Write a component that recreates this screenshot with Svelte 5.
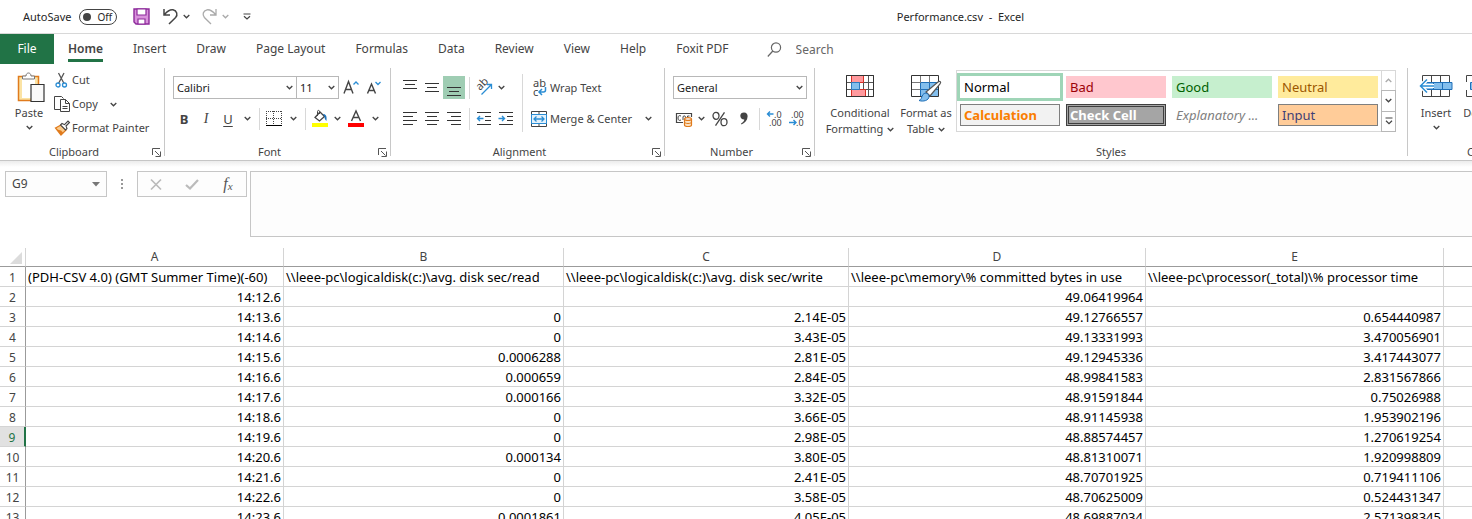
<script>
  const tabs = ['Home', 'Insert', 'Draw', 'Page Layout', 'Formulas', 'Data', 'Review', 'View', 'Help', 'Foxit PDF'];
  const cellStyles = [
    { name: 'Normal', kind: 'normal' },
    { name: 'Bad', kind: 'bad' },
    { name: 'Good', kind: 'good' },
    { name: 'Neutral', kind: 'neutral' },
    { name: 'Calculation', kind: 'calculation' },
    { name: 'Check Cell', kind: 'check' },
    { name: 'Explanatory ...', kind: 'explanatory' },
    { name: 'Input', kind: 'input' }
  ];
  const columns = ['A', 'B', 'C', 'D', 'E', ''];
  const rows = [
    ['(PDH-CSV 4.0) (GMT Summer Time)(-60)', '\\\\leee-pc\\logicaldisk(c:)\\avg. disk sec/read', '\\\\leee-pc\\logicaldisk(c:)\\avg. disk sec/write', '\\\\leee-pc\\memory\\% committed bytes in use', '\\\\leee-pc\\processor(_total)\\% processor time'],
    ['14:12.6', '', '', '49.06419964', ''],
    ['14:13.6', '0', '2.14E-05', '49.12766557', '0.654440987'],
    ['14:14.6', '0', '3.43E-05', '49.13331993', '3.470056901'],
    ['14:15.6', '0.0006288', '2.81E-05', '49.12945336', '3.417443077'],
    ['14:16.6', '0.000659', '2.84E-05', '48.99841583', '2.831567866'],
    ['14:17.6', '0.000166', '3.32E-05', '48.91591844', '0.75026988'],
    ['14:18.6', '0', '3.66E-05', '48.91145938', '1.953902196'],
    ['14:19.6', '0', '2.98E-05', '48.88574457', '1.270619254'],
    ['14:20.6', '0.000134', '3.80E-05', '48.81310071', '1.920998809'],
    ['14:21.6', '0', '2.41E-05', '48.70701925', '0.719411106'],
    ['14:22.6', '0', '3.58E-05', '48.70625009', '0.524431347'],
    ['14:23.6', '0.0001861', '4.05E-05', '48.69887034', '2.571398345']
  ];
  const activeRow = 9;
  let autosave = $state(false);
  let cellRef = $state('G9');
</script>

{#snippet chev(color = '#444')}
  <svg class="chev" width="7" height="5" viewBox="0 0 7 5" fill="none" stroke={color} stroke-width="1.3"><path d="M.7 1 3.5 3.8 6.3 1" /></svg>
{/snippet}

{#snippet launcher(label)}
  <button class="launcher" aria-label={label}>
    <svg width="9" height="9" viewBox="0 0 9 9" fill="none" stroke="#555"><path d="M.5 7V.5H8M3 3l4.5 4.5M8.5 3.5v5h-5" /></svg>
  </button>
{/snippet}

{#snippet lines(list)}
  <svg width="16" height="16" viewBox="0 0 16 16" stroke="#333" shape-rendering="crispEdges">
    {#each list as [x1, x2, y]}<path d="M{x1} {y}.5H{x2}" />{/each}
  </svg>
{/snippet}

<div class="app">
  <header class="titlebar">
    <label class="autosave">
      <span>AutoSave</span>
      <input type="checkbox" bind:checked={autosave} />
      <span class="switch"><i></i><b>{autosave ? 'On' : 'Off'}</b></span>
    </label>
    <div class="quick">
      <button class="save" aria-label="Save">
        <svg width="17" height="17" viewBox="0 0 17 17"><path d="M1 1h15v15H3L1 14z" fill="#d992dc" stroke="#8d2a9b" stroke-width="1.4" /><path d="M4 1h9v6H4zM5 11h7v5H5z" fill="#fff" stroke="#8d2a9b" stroke-width="1.2" /></svg>
      </button>
      <button class="undo" aria-label="Undo">
        <svg width="15" height="17" viewBox="0 0 15 17" fill="none" stroke="#444" stroke-width="1.5"><path d="M1 1v6h6M1.5 6.5C4 3.5 7 1.3 10 1.8c4 .8 5 5 2.600 7.700L6 16" /></svg>
      </button>
      <button class="more" aria-label="Undo history">{@render chev()}</button>
      <button class="redo" aria-label="Redo">
        <svg width="15" height="17" viewBox="0 0 15 17" fill="none" stroke="#aaa" stroke-width="1.3"><path d="M14 1v6H8M13.500 6.500C11 3.500 8 1.300 5 1.800c-4 .8-5 5-2.600 7.700L9 16" /></svg>
      </button>
      <button class="more" aria-label="Redo history">{@render chev('#aaa')}</button>
      <button class="custom" aria-label="Customize Quick Access Toolbar">
        <svg width="8" height="7" viewBox="0 0 8 7" fill="none" stroke="#444" stroke-width="1.200"><path d="M.5 1h7M1 3.200 4 6l3-2.800" /></svg>
      </button>
    </div>
    <h1>Performance.csv&nbsp; -&nbsp; Excel</h1>
  </header>

  <nav class="tabs">
    <button class="file">File</button>
    {#each tabs as tab}
      <button class="tab" class:active={tab === 'Home'}>{tab}</button>
    {/each}
    <label class="search">
      <svg width="15" height="16" viewBox="0 0 15 16" fill="none" stroke="#666" stroke-width="1.200"><circle cx="9" cy="5.500" r="4.600" /><path d="M5.800 9 .8 14.500" /></svg>
      <input type="text" placeholder="Search" aria-label="Search" />
    </label>
  </nav>

  <div class="ribbon">
    <section class="group clipboard">
      <div class="body">
        <button class="big paste">
          <svg width="28" height="32" viewBox="0 0 28 32"><path d="M1.500 4.500h20v24h-20z" fill="#fbe3a4" stroke="#e07b1d" stroke-width="1.500" /><path d="M5 7h13v19H5z" fill="#fff" /><path d="M5.500 7V4h3.500c0-4 5-4 5 0h3.500v3z" fill="#fff" stroke="#777" /><path d="M14 12.500h13v17H14z" fill="#f9f9f9" stroke="#333" stroke-width="1.200" /></svg>
          <span>Paste</span>
          {@render chev()}
        </button>
        <div class="stack">
          <button>
            <svg width="16" height="16" viewBox="0 0 16 16" fill="none"><path d="M4.500 1l5.500 10.500M10 1l-5.500 10.500" stroke="#555" stroke-width="1.300" /><circle cx="4" cy="13" r="2" stroke="#2a8dd4" stroke-width="1.300" /><circle cx="10.500" cy="13" r="2" stroke="#2a8dd4" stroke-width="1.300" /></svg>
            <span>Cut</span>
          </button>
          <button>
            <svg width="16" height="16" viewBox="0 0 16 16" fill="#fff" stroke="#444"><path d="M6 13.500H.500V.500h7l2 2" /><path d="M6.500 3.500h5l4 4v8h-9z" /><path d="M11.500 3.500v4h4M8.500 10.500h5M8.500 12.500h5" fill="none" /></svg>
            <span>Copy</span>
            {@render chev()}
          </button>
          <button>
            <svg width="16" height="16" viewBox="0 0 16 16"><path d="M1.500 8 7 5l5 5-5 5z" fill="#fbcb8b" stroke="#e07b1d" stroke-width="1.300" /><path d="M3 9.500l4 1 2 2-2 2.500z" fill="#e07b1d" /><path d="M6.500 5 8 3.500l2.500 1.200L14 1l1.500 1.500L12 6l1 2.500-1.500 1.500z" fill="#fff" stroke="#444" stroke-width="1.100" /></svg>
            <span>Format Painter</span>
          </button>
        </div>
      </div>
      <footer><span>Clipboard</span>{@render launcher('Clipboard settings')}</footer>
    </section>

    <section class="group font">
      <div class="rows">
        <div class="row">
          <div class="combo face"><select aria-label="Font"><option>Calibri</option></select>{@render chev()}</div>
          <div class="combo size"><select aria-label="Font size"><option>11</option></select>{@render chev()}</div>
          <button class="w24" aria-label="Increase font size">
            <svg width="17" height="16" viewBox="0 0 17 16" fill="none"><path d="M1 13.500 5.500 1.500l4.500 12M2.500 9.500h6" stroke="#444" stroke-width="1.400" /><path d="M10.500 4.500 13 2l2.500 2.500" stroke="#2a8dd4" stroke-width="1.300" /></svg>
          </button>
          <button class="w22" aria-label="Decrease font size">
            <svg width="16" height="16" viewBox="0 0 16 16" fill="none"><path d="M1.500 13.500 5.500 4l4 9.500M3 10.500h5" stroke="#444" stroke-width="1.400" /><path d="M9.500 2 12 4.500 14.500 2" stroke="#2a8dd4" stroke-width="1.300" /></svg>
          </button>
        </div>
        <div class="row">
          <button class="w22 glyph bold">B</button>
          <button class="w22 glyph italic">I</button>
          <button class="w22 glyph under">U</button>
          <button class="w16" aria-label="Underline options">{@render chev()}</button>
          <i class="sep"></i>
          <button class="w22" aria-label="Borders">
            <svg width="16" height="16" viewBox="0 0 16 16" fill="none" stroke="#444" shape-rendering="crispEdges"><path d="M.5 0v14M15.500 0v14M0 .5h16" stroke-dasharray="1 1" /><path d="M7.500 0v14M0 7.500h16" stroke-dasharray="1 1" /><path d="M0 14.500h16" stroke="#000" /></svg>
          </button>
          <button class="w16" aria-label="Border options">{@render chev()}</button>
          <i class="sep"></i>
          <button class="w22" aria-label="Fill color">
            <svg width="16" height="17" viewBox="0 0 16 17"><path d="M3 7.500 8 2l4.500 4.500L7.500 11z" fill="#fff" stroke="#444" stroke-width="1.300" /><path d="M5.500 6V1.500c0-1.500 2-1.500 2 0V4" fill="none" stroke="#444" /><path d="M11 4c3 0 4 2 3.500 7-1.500-1-2-3-2-4.500z" fill="#1e74bd" /><path d="M0 13h16v4H0z" fill="#ff0" /></svg>
          </button>
          <button class="w12" aria-label="Fill options">{@render chev()}</button>
          <button class="w26" aria-label="Font color">
            <svg width="16" height="17" viewBox="0 0 16 17"><path d="M3.500 11 8 1l4.500 10M5 7.500h6" fill="none" stroke="#444" stroke-width="1.400" /><path d="M0 13h16v4H0z" fill="#f00" /></svg>
          </button>
          <button class="w12" aria-label="Font color options">{@render chev()}</button>
        </div>
      </div>
      <footer><span>Font</span>{@render launcher('Font settings')}</footer>
    </section>

    <section class="group alignment">
      <div class="body">
        <div class="rows">
          <div class="row">
            <button class="w22" aria-label="Top align">{@render lines([[1, 15, 0], [3, 13, 4], [1, 15, 8]])}</button>
            <button class="w22" aria-label="Middle align">{@render lines([[1, 15, 3], [3, 13, 7], [1, 15, 11]])}</button>
            <button class="w22 on" aria-label="Bottom align">{@render lines([[1, 15, 7], [3, 13, 11], [1, 15, 15]])}</button>
            <i class="sep"></i>
            <button class="w22" aria-label="Orientation">
              <svg width="17" height="17" viewBox="0 0 17 17"><text x="0" y="0" transform="translate(4 12) rotate(-45)" font-size="11" fill="#444">ab</text><path d="M5.500 15.500 15.500 5.500M11 5.500h4.500V10" fill="none" stroke="#2a8dd4" stroke-width="1.300" /></svg>
            </button>
            <button class="w12" aria-label="Orientation options">{@render chev()}</button>
          </div>
          <div class="row">
            <button class="w22" aria-label="Align left">{@render lines([[1, 15, 1], [1, 11, 5], [1, 15, 9], [1, 11, 13]])}</button>
            <button class="w22" aria-label="Center">{@render lines([[1, 15, 1], [3, 13, 5], [1, 15, 9], [3, 13, 13]])}</button>
            <button class="w22" aria-label="Align right">{@render lines([[1, 15, 1], [5, 15, 5], [1, 15, 9], [5, 15, 13]])}</button>
            <i class="sep"></i>
            <button class="w22" aria-label="Decrease indent">
              <svg width="16" height="16" viewBox="0 0 16 16" fill="none"><path d="M1 1.500h14M9 5.500h6M9 9.500h6M1 13.500h14" stroke="#333" shape-rendering="crispEdges" /><path d="M7.500 7.500H1.500M4 5 1.500 7.500 4 10" stroke="#2a8dd4" stroke-width="1.400" /></svg>
            </button>
            <button class="w22" aria-label="Increase indent">
              <svg width="16" height="16" viewBox="0 0 16 16" fill="none"><path d="M1 1.500h14M9 5.500h6M9 9.500h6M1 13.500h14" stroke="#333" shape-rendering="crispEdges" /><path d="M.5 7.500h6M4 5l2.500 2.500L4 10" stroke="#2a8dd4" stroke-width="1.400" /></svg>
            </button>
          </div>
        </div>
        <i class="sep tall"></i>
        <div class="rows wide">
          <button class="row item">
            <svg width="16" height="18" viewBox="0 0 16 18"><text x="2" y="8" font-size="11" fill="#444">ab</text><text x="2" y="17" font-size="11" fill="#444">c</text><path d="M14.500 8v3c0 1.500-1 2-2 2H8.500M11 10 8 13l3 3" fill="none" stroke="#2a8dd4" stroke-width="1.500" /></svg>
            <span>Wrap Text</span>
          </button>
          <button class="row item">
            <svg width="16" height="16" viewBox="0 0 16 16" fill="none"><path d="M.5.500h15v15H.500zM8 .500v3M8 12.500v3" stroke="#444" /><path d="M.500 3.500h15v9H.500z" fill="#e4f1fb" stroke="#2a8dd4" /><path d="M3 8h10M5.500 5.500 3 8l2.500 2.500M10.500 5.500 13 8l-2.500 2.500" stroke="#2a8dd4" stroke-width="1.300" /></svg>
            <span>Merge &amp; Center</span>
            {@render chev()}
          </button>
        </div>
      </div>
      <footer><span>Alignment</span>{@render launcher('Alignment settings')}</footer>
    </section>

    <section class="group number">
      <div class="rows">
        <div class="row">
          <div class="combo format"><select aria-label="Number format"><option>General</option></select>{@render chev()}</div>
        </div>
        <div class="row">
          <button class="w22" aria-label="Accounting format">
            <svg width="17" height="16" viewBox="0 0 17 16" fill="none"><path d="M7 11.500H.500v-9h15V6" stroke="#444" stroke-width="1.200" /><path d="M5 5c-2-1-3 0-3 2s1 3 3 2M7 9V6c0-1.500 2.500-1.500 2.500 0v1M11.500 6V5h2" stroke="#444" /><path d="M8.500 8v6c0 2 7 2 7 0V8" fill="#fbe3c4" stroke="#e07b1d" stroke-width="1.200" /><ellipse cx="12" cy="8" rx="3.500" ry="1.400" fill="#fff" stroke="#e07b1d" stroke-width="1.200" /><path d="M8.500 11c0 2 7 2 7 0" stroke="#e07b1d" /></svg>
          </button>
          <button class="w12" aria-label="Accounting options">{@render chev()}</button>
          <button class="w26" aria-label="Percent style">
            <svg width="16" height="16" viewBox="0 0 16 16" fill="none" stroke="#444" stroke-width="1.300"><ellipse cx="4" cy="4.800" rx="3" ry="3.500" /><ellipse cx="12" cy="11.200" rx="3" ry="3.500" /><path d="M12.500 1.300l-9 13.400" /></svg>
          </button>
          <button class="w22" aria-label="Comma style">
            <svg width="8" height="13" viewBox="0 0 8 13"><path d="M.3 3.800C.3 1.500 1.800.4 4 .4c2.500 0 3.800 1.700 3.600 4.200C7.300 8.500 5.300 11 1.500 12.500L1 11.500c2.300-1.200 3.200-2.500 3.300-4C2 7.600.3 6.200.3 3.800z" fill="#444" /></svg>
          </button>
          <i class="sep"></i>
          <button class="w22" aria-label="Increase decimal">
            <svg width="17" height="17" viewBox="0 0 17 17"><path d="M7.500 4H1.500M4 1.500 1.500 4 4 6.500" fill="none" stroke="#2a8dd4" stroke-width="1.400" /><text x="8" y="8" font-size="9" fill="#444">.0</text><text x="3" y="16" font-size="9" fill="#444">.00</text></svg>
          </button>
          <button class="w22" aria-label="Decrease decimal">
            <svg width="17" height="17" viewBox="0 0 17 17"><text x="3" y="8" font-size="9" fill="#444">.00</text><text x="8" y="16" font-size="9" fill="#444">.0</text><path d="M1 12.500h7M5.500 10 8 12.500 5.500 15" fill="none" stroke="#2a8dd4" stroke-width="1.400" /></svg>
          </button>
        </div>
      </div>
      <footer><span>Number</span>{@render launcher('Number settings')}</footer>
    </section>

    <section class="group styles">
      <div class="body">
        <button class="big cond">
          <svg width="28" height="24" viewBox="0 0 28 24"><path d="M.500 1.500h27v21H.500zM.500 8.500h27M.500 15.500h27M5.500 1.500v21M22.500 1.500v21M17.500 1.500v21" fill="#fff" stroke="#555" /><path d="M5.500 1.500h12v7h-12zM5.500 15.500h14v7h-14z" fill="#ff9a9e" stroke="#d93025" /><path d="M5.500 8.500h8v7h-8z" fill="#83beec" stroke="#2a7bbf" /><path d="M.500 1.500h27v21H.500z" fill="none" stroke="#333" /></svg>
          <span>Conditional</span>
          <span>Formatting {@render chev()}</span>
        </button>
        <button class="big table">
          <svg width="32" height="28" viewBox="0 0 32 28"><path d="M1.500 1.500h27v21h-27z" fill="#fff" /><path d="M10.500 8.500h18v14h-18z" fill="#83beec" /><path d="M10.500 8.500h18M10.500 15.500h18M10.500 8.500v14M19.500 8.500v14" stroke="#1e6fb8" /><path d="M1.500 8.500h9M1.500 15.500h9M10.500 1.500v7M19.500 1.500v7" stroke="#777" /><path d="M1.500 1.500h27v21h-27z" fill="none" stroke="#333" /><path d="M16 18 28 8c2-1.500 3.500 0 2 2L20 22z" fill="#fff" stroke="#555" stroke-width="1.200" /><path d="M9 26.500c3-1 2-3 4-6 2-2.500 6-1 6 2 0 4-6 5.500-10 4z" fill="#83beec" stroke="#1e6fb8" /></svg>
          <span>Format as</span>
          <span>Table {@render chev()}</span>
        </button>
        <div class="gallery">
          <div class="cells">
            {#each cellStyles as s}
              <button class="style {s.kind}">{s.name}</button>
            {/each}
          </div>
          <div class="scroll">
            <button aria-label="Previous styles"><svg width="7" height="5" viewBox="0 0 7 5" fill="none" stroke="#aaa" stroke-width="1.300"><path d="M.7 4 3.500 1.200 6.300 4" /></svg></button>
            <button aria-label="Next styles">{@render chev()}</button>
            <button aria-label="More styles"><svg width="8" height="8" viewBox="0 0 8 8" fill="none" stroke="#444" stroke-width="1.200"><path d="M.5 1h7M1 3.800 4 6.600l3-2.800" /></svg></button>
          </div>
        </div>
      </div>
      <footer><span>Styles</span></footer>
    </section>

    <section class="group cellgroup">
      <div class="body">
        <button class="big">
          <svg width="34" height="24" viewBox="0 0 34 24"><path d="M3.500 1.500h27v21h-27zM12.500 1.500v21M21.500 1.500v21" fill="#fff" stroke="#444" /><path d="M5 8.500h28v7H5z" fill="#83beec" stroke="#1e6fb8" /><path d="M14.500 8.500v7M23.500 8.500v7" stroke="#1e6fb8" /><path d="M15 12H2.500M8 5.500 1.500 12 8 18.500" fill="none" stroke="#fff" stroke-width="4" /><path d="M15 12H2.500M8 5.500 1.500 12 8 18.500" fill="none" stroke="#2a8dd4" stroke-width="1.500" /></svg>
          <span>Insert</span>
          {@render chev()}
        </button>
        <button class="big">
          <svg width="34" height="24" viewBox="0 0 34 24"><path d="M3.500 1.500h27v21h-27zM12.500 1.500v21M21.500 1.500v21" fill="#fff" stroke="#444" /><path d="M0 8h7v8H0z" fill="#fff" /><path d="M7.500 8.500h18v7h-18z" fill="#83beec" stroke="#1e6fb8" /><path d="M22 7l9 10M31 7l-9 10" stroke="#d93025" stroke-width="1.500" /></svg>
          <span>Delete</span>
          {@render chev()}
        </button>
      </div>
      <footer><span>Cells</span></footer>
    </section>
  </div>

  <div class="formula">
    <div class="namebox">
      <input type="text" aria-label="Name box" bind:value={cellRef} />
      <svg width="8" height="5" viewBox="0 0 8 5"><path d="M0 0h8L4 4.500z" fill="#777" /></svg>
    </div>
    <svg class="grip" width="2" height="11" viewBox="0 0 2 11" fill="#999"><path d="M0 0h2v2H0zM0 4h2v2H0zM0 8h2v2H0z" /></svg>
    <div class="actions">
      <button aria-label="Cancel"><svg width="12" height="11" viewBox="0 0 12 11" fill="none" stroke="#bbb" stroke-width="1.700"><path d="M1 .5l10 10M11 .5l-10 10" /></svg></button>
      <button aria-label="Enter"><svg width="14" height="11" viewBox="0 0 14 11" fill="none" stroke="#bbb" stroke-width="2.200"><path d="M1 6l4 3.500L13 1" /></svg></button>
      <button class="fx" aria-label="Insert function"><i>f<sub>x</sub></i></button>
    </div>
    <textarea aria-label="Formula bar"></textarea>
  </div>

  <table>
    <colgroup><col class="c0" /><col class="ca" /><col class="cb" /><col class="cc" /><col class="cd" /><col class="ce" /><col /></colgroup>
    <thead>
      <tr>
        <th class="corner"><svg width="12" height="12" viewBox="0 0 12 12"><path d="M12 0v12H0z" fill="#dcdcdc" /></svg></th>
        {#each columns as c}<th>{c}</th>{/each}
      </tr>
    </thead>
    <tbody>
      {#each rows as row, r}
        <tr class:head={r === 0} class:current={r + 1 === activeRow}>
          <th>{r + 1}</th>
          {#each row as cell}<td>{cell}</td>{/each}
          <td></td>
        </tr>
      {/each}
    </tbody>
  </table>
</div>

<style>
  :global(body) { overflow: hidden; background: #fff; }
  .app { height: 100vh; overflow: hidden; background: #fff; color: #444; font: 11px/16px "Noto Sans", "Segoe UI", sans-serif; }
  .app * { box-sizing: border-box; }
  button, input, select, textarea { font: inherit; color: inherit; border: 0; padding: 0; margin: 0; background: none; border-radius: 0; outline: 0; }
  button { display: flex; align-items: center; justify-content: center; white-space: nowrap; }
  svg { display: block; flex: none; overflow: visible; }

  .titlebar { display: flex; align-items: center; height: 34px; border-bottom: 1px solid #d8d8d8; padding-left: 23px; color: #262626; }
  .autosave { display: flex; align-items: center; gap: 8px; width: 110px; }
  .autosave input { position: absolute; opacity: 0; }
  .switch { display: flex; align-items: center; gap: 6px; width: 38px; height: 16px; border: 1px solid #444; border-radius: 8px; padding-left: 3px; }
  .switch i { width: 8px; height: 8px; border-radius: 50%; background: #444; }
  .switch b { font-weight: 400; font-size: 10px; }
  .quick { display: flex; align-items: center; }
  .save { width: 17px; }
  .undo, .redo { width: 15px; margin-left: 13px; }
  .more { width: 7px; margin-left: 5px; }
  .redo { margin-left: 12px; }
  .custom { width: 8px; margin-left: 14px; }
  h1 { flex: 1; margin: 0; padding-right: 448px; text-align: right; font-weight: 400; font-size: 11px; line-height: 32px; }

  .tabs { display: flex; align-items: stretch; height: 30px; gap: 30px; font-size: 12px; }
  .file { width: 54px; background: #217346; color: #fff; margin-right: -16px; }
  .tab { border-bottom: 3px solid transparent; padding-top: 5px; height: 28px; }
  .active { font-weight: 600; border-color: #217346; }
  .search { display: flex; align-items: center; gap: 14px; margin-left: 8px; padding-top: 1px; }
  .search input { width: 120px; }
  .search input::placeholder { color: #666; opacity: 1; }

  .ribbon { display: flex; height: 97px; border-bottom: 1px solid #c6c6c6; overflow: hidden; padding: 4px 0; }
  .group { flex: none; display: flex; flex-direction: column; justify-content: space-between; height: 88px; border-right: 1px solid #c8c8c8; }
  .clipboard { width: 165px; }
  .font { width: 226px; padding-left: 8px; }
  .alignment { width: 274px; padding-left: 8px; }
  .number { width: 150px; padding-left: 8px; }
  .styles { width: 593px; }
  .cellgroup { border: 0; padding-left: 7px; }
  footer { display: flex; align-items: center; height: 16px; margin-bottom: -4px; }
  footer span { flex: 1; text-align: center; }
  .font footer, .alignment footer, .number footer { margin-left: -8px; }
  .launcher { width: 16px; }
  .body { display: flex; }
  .big { flex-direction: column; justify-content: flex-start; }
  .big span { display: flex; align-items: center; gap: 4px; }
  .paste { width: 42px; margin: 4px 0 0 8px; }
  .paste svg:first-child { margin-left: 4px; }
  .paste span { margin: 1px 0 4px; }
  .stack { display: flex; flex-direction: column; padding-left: 4px; }
  .stack button { height: 24px; justify-content: flex-start; }
  .stack button span { margin: 0 12px 0 2px; }

  .rows { display: flex; flex-direction: column; gap: 8px; padding-top: 8px; }
  .row { display: flex; align-items: center; height: 23px; }
  .row > * { flex: none; }
  .w12 { width: 12px; height: 23px; }
  .w16 { width: 16px; height: 23px; }
  .w22 { width: 22px; height: 23px; }
  .w24 { width: 24px; height: 23px; }
  .w26 { width: 26px; height: 23px; }
  .on { background: #9fcdb3; }
  .sep { width: 1px; height: 22px; background: #d8d8d8; margin: 0 3px 0 4px; }
  .tall { height: 58px; margin: 6px 8px 0 5px; }
  .combo { display: flex; align-items: center; height: 23px; border: 1px solid #b8b8b8; color: #222; position: relative; }
  .combo select { flex: 1; width: 100%; height: 21px; appearance: none; padding: 0 3px; }
  .combo .chev { position: absolute; right: 3px; pointer-events: none; }
  .face { width: 124px; }
  .size { width: 43px; margin-left: -1px; }
  .format { width: 134px; }
  .glyph { font-size: 13px; }
  .bold { font-weight: 700; }
  .italic { font: italic 14px "Liberation Serif", serif; }
  .under { text-decoration: underline; text-underline-offset: 2px; }
  .item { justify-content: flex-start; gap: 3px; }
  .item .chev { margin-left: 10px; }

  .cond { width: 80px; margin: 6px 0 0 5px; }
  .table { width: 56px; margin: 6px 0 0 -2px; }
  .cond span, .table span { margin: 0; }
  .cond svg + span { margin-top: 7px; }
  .table svg + span { margin-top: 3px; }
  .gallery { display: flex; height: 62px; margin: 2px 0 0 2px; }
  .cells { display: grid; grid-template-columns: repeat(4, 100px); grid-auto-rows: 22px; gap: 6px; padding: 5px 3px; border: 1px solid #d8d8d8; border-right: 0; }
  .style { justify-content: flex-start; padding-left: 4px; font-size: 13px; line-height: 20px; }
  .normal { color: #000; background: #fff; box-shadow: 0 0 0 3px #9fd5b7; }
  .bad { color: #9c0006; background: #ffc7ce; }
  .good { color: #006100; background: #c6efce; }
  .neutral { color: #9c5700; background: #ffeb9c; }
  .calculation { color: #fa7d00; background: #f2f2f2; border: 1px solid #7f7f7f; font-weight: 700; padding-left: 3px; }
  .check { color: #fff; background: #a5a5a5; border: 3px double #3f3f3f; font-weight: 700; padding-left: 1px; }
  .explanatory { color: #7f7f7f; font-style: italic; }
  .input { color: #3f3f76; background: #ffcc99; border: 1px solid #7f7f7f; padding-left: 3px; }
  .scroll { display: flex; flex-direction: column; width: 15px; }
  .scroll button { flex: 1; border: 1px solid #b8b8b8; margin-bottom: -1px; }
  .scroll button:first-child { border-color: #d8d8d8; }
  .scroll button:last-child { margin: 0; }
  .cellgroup .big { width: 42px; margin-top: 6px; }
  .cellgroup .big span { margin: 7px 0 4px; }
  .cellgroup .big + .big { margin-left: 2px; }
  .cellgroup footer { padding-left: 42px; }

  .formula { display: flex; align-items: flex-start; height: 87px; padding: 10px 0 11px 5px; background: linear-gradient(#ececec, #fff 6px); }
  .namebox, .actions { display: flex; align-items: center; height: 26px; border: 1px solid #c6c6c6; background: #fdfdfd; }
  .namebox { width: 102px; padding: 0 6px; }
  .namebox input { flex: 1; width: 60px; font-size: 12px; }
  .grip { margin: 8px 14px 0; }
  .actions { width: 110px; justify-content: space-around; }
  .actions button { width: 24px; height: 24px; }
  .fx { font: 16px "Liberation Serif", serif; color: #555; }
  .fx sub { font-size: 11px; vertical-align: -1px; }
  textarea { flex: 1; height: 66px; margin-left: 3px; border: 1px solid #c6c6c6; border-right: 0; background: #fdfdfd; resize: none; }

  table { width: 100%; table-layout: fixed; border-collapse: separate; border-spacing: 0; color: #000; }
  .c0 { width: 26px; }
  .ca { width: 258px; }
  .cb { width: 280px; }
  .cc { width: 285px; }
  .cd { width: 297px; }
  .ce { width: 298px; }
  th, td { height: 20px; padding: 2px 2px 0; border: solid #d4d4d4; border-width: 0 1px 1px 0; line-height: 17px; white-space: nowrap; }
  td { font-size: 13px; text-align: right; }
  .head td { text-align: left; }
  th { font-size: 12px; font-weight: 400; color: #444; text-align: center; padding: 2px 0 0; }
  thead th { height: 19px; padding: 0; line-height: 18px; border-bottom-color: #9b9b9b; }
  thead th:last-child, td:last-child { border-right: 0; }
  tbody th { border-right-color: #9b9b9b; }
  .corner svg { margin: 2px 0 0 10px; }
  .current th { background: #e1e1e1; color: #217346; border-right: 2px solid #217346; }
</style>
